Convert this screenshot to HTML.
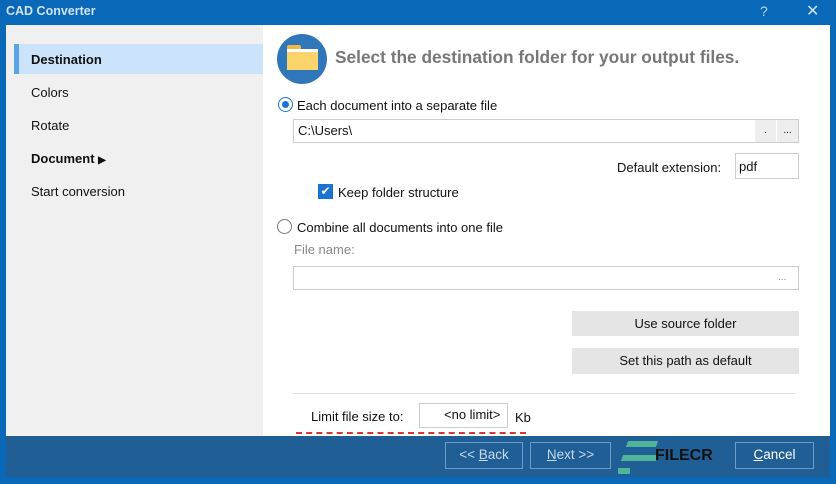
<!DOCTYPE html>
<html><head><style>
*{margin:0;padding:0;box-sizing:border-box}
body{width:836px;height:484px;overflow:hidden;background:#0a68b8;font-family:"Liberation Sans",sans-serif;font-size:13px;color:#111;position:relative}
.a{position:absolute}
.title{left:6px;top:4px;color:#cfe2f5;font-weight:bold;font-size:12.5px}
.side{left:6px;top:25px;width:257px;height:411px;background:#f0f0f0}
.main{left:263px;top:25px;width:567px;height:411px;background:#fff}
.nav{left:31px;font-size:13px}
.box{border:1px solid #ccc;background:#fff}
.btn{background:#e5e5e5;text-align:center;line-height:25px}
.bb{border:1px solid #6f9cc6;color:#c7d8ea;text-align:center;line-height:24px;font-size:13.5px}
</style></head><body>
<div class="a title">CAD Converter</div>
<div class="a" style="left:760px;top:3px;color:#bcd4ee;font-size:14px">?</div>
<div class="a" style="left:806px;top:1px;color:#cfe2f5;font-size:16px">✕</div>
<div class="a side"></div>
<div class="a" style="left:14px;top:44px;width:249px;height:30px;background:#cce4fb"></div>
<div class="a" style="left:14px;top:44px;width:5px;height:30px;background:#5aa4ea"></div>
<div class="a nav" style="top:52px;font-weight:bold">Destination</div>
<div class="a nav" style="top:85px">Colors</div>
<div class="a nav" style="top:118px">Rotate</div>
<div class="a nav" style="top:151px;font-weight:bold">Document <span style="font-size:10px">▶</span></div>
<div class="a nav" style="top:184px">Start conversion</div>
<div class="a main"></div>
<div class="a" style="left:277px;top:34px;width:50px;height:50px;border-radius:50%;background:#2f77b8"></div>
<div class="a" style="left:287px;top:45px;width:14px;height:6px;background:#f2b64a;border-radius:2px 2px 0 0"></div>
<div class="a" style="left:287px;top:49px;width:31px;height:21px;background:#fbd46b;border-top:3px solid #fff"></div>
<div class="a" style="left:335px;top:47px;font-size:17.3px;font-weight:bold;color:#777">Select the destination folder for your output files.</div>
<div class="a" style="left:278px;top:97px;width:15px;height:15px;border-radius:50%;border:1px solid #1a73d0;background:#fff"></div>
<div class="a" style="left:282px;top:101px;width:7px;height:7px;border-radius:50%;background:#1a73d0"></div>
<div class="a" style="left:297px;top:98px">Each document into a separate file</div>
<div class="a box" style="left:293px;top:119px;width:506px;height:24px"></div>
<div class="a" style="left:298px;top:123px">C:\Users\</div>
<div class="a" style="left:755px;top:120px;width:21px;height:22px;background:#eee;text-align:center;font-size:10px;line-height:22px">.</div>
<div class="a" style="left:777px;top:120px;width:21px;height:22px;background:#eee;text-align:center;font-size:10px;line-height:22px">...</div>
<div class="a" style="left:617px;top:160px">Default extension:</div>
<div class="a box" style="left:735px;top:153px;width:64px;height:26px"></div>
<div class="a" style="left:739px;top:159px">pdf</div>
<div class="a" style="left:318px;top:184px;width:15px;height:15px;background:#1a73d0;color:#fff;font-size:12px;text-align:center;line-height:15px">✔</div>
<div class="a" style="left:338px;top:185px">Keep folder structure</div>
<div class="a" style="left:277px;top:219px;width:15px;height:15px;border-radius:50%;border:1px solid #777;background:#fff"></div>
<div class="a" style="left:297px;top:220px">Combine all documents into one file</div>
<div class="a" style="left:294px;top:242px;color:#888">File name:</div>
<div class="a box" style="left:293px;top:266px;width:506px;height:24px"></div>
<div class="a" style="left:778px;top:272px;color:#888;font-size:10px">...</div>
<div class="a btn" style="left:572px;top:311px;width:227px;height:25px">Use source folder</div>
<div class="a btn" style="left:572px;top:348px;width:227px;height:26px">Set this path as default</div>
<div class="a" style="left:293px;top:393px;width:502px;height:1px;background:#ddd"></div>
<div class="a" style="left:311px;top:409px">Limit file size to:</div>
<div class="a box" style="left:419px;top:403px;width:89px;height:25px"></div>
<div class="a" style="left:444px;top:407px">&lt;no limit&gt;</div>
<div class="a" style="left:515px;top:410px">Kb</div>
<div class="a" style="left:296px;top:432px;width:230px;height:3px;border-top:2px dashed #d33"></div>
<div class="a" style="left:6px;top:436px;width:824px;height:41px;background:#205e96"></div>
<div class="a bb" style="left:445px;top:442px;width:78px;height:27px">&lt;&lt; <u>B</u>ack</div>
<div class="a bb" style="left:530px;top:442px;width:81px;height:27px"><u>N</u>ext &gt;&gt;</div>
<div class="a" style="left:627px;top:441px;width:30px;height:6px;background:#4fb59a;transform:skewX(-20deg)"></div>
<div class="a" style="left:622px;top:455px;width:35px;height:6px;background:#4fb59a;transform:skewX(-20deg)"></div>
<div class="a" style="left:618px;top:468px;width:12px;height:6px;background:#4fb59a"></div>
<div class="a" style="left:655px;top:447px;font-weight:bold;font-size:16px;color:#111">FILECR</div>
<div class="a bb" style="left:735px;top:442px;width:79px;height:27px;color:#fff"><u>C</u>ancel</div>
</body></html>
